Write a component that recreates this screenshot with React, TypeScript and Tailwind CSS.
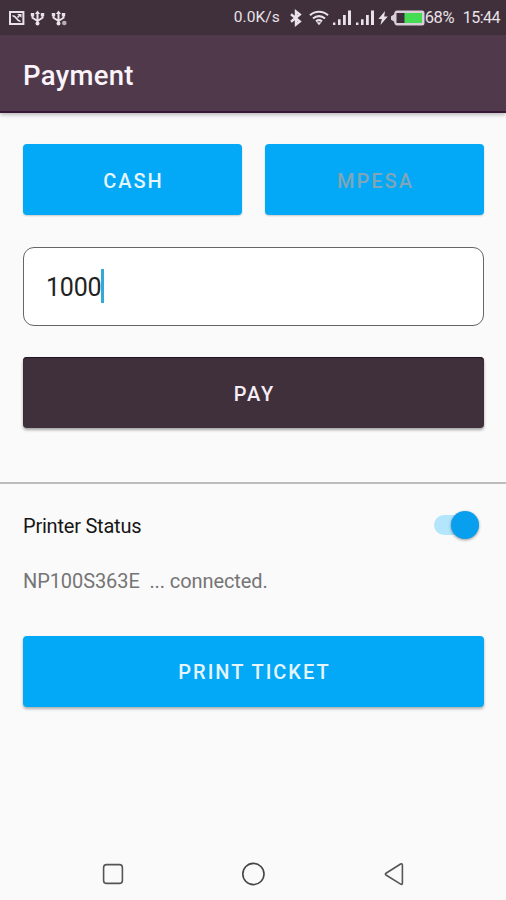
import React, { useState } from 'react';

type PaymentMethod = 'cash' | 'mpesa';

const UsbIcon: React.FC<{ badge?: boolean }> = ({ badge }) => (
  <svg width="16" height="16" viewBox="0 0 16 16" fill="none" stroke="#e9e2e8" strokeWidth="2">
    <path d="M7.5 2v12M2.5 5v2.8L7.5 11M12.5 5v2.8L7.5 11" />
    <path d="M4.9 4 7.5 .4 10.1 4ZM.8 3h3.4v3.2H.8ZM10.8 3h3.4v3.2h-3.4Z" fill="#e9e2e8" stroke="none" />
    <circle cx="7.5" cy="13.5" r="2" fill="#e9e2e8" stroke="none" />
    {badge && <circle cx="13.3" cy="13" r="2.3" fill="#b9adb7" stroke="none" />}
  </svg>
);

const SignalIcon = () => (
  <svg width="18" height="16" viewBox="0 0 18 16" fill="#e9e2e8">
    <path d="M0 12.5h2.4V15H0ZM5 9.3h2.6V15H5ZM10 5h2.8v10H10ZM15 .5h3V15h-3Z" />
  </svg>
);

const StatusBar = () => (
  <div className="flex h-[35px] items-center bg-[#40303c] pr-1.5 pl-2 text-[#e9e2e8]">
    <svg width="17" height="16" viewBox="0 0 17 16" fill="none" stroke="#e9e2e8" strokeWidth="2">
      <rect x="2" y="2" width="13.4" height="12" />
      <path d="M4.5 5.8c4-.5 3.5 5 8 5.7M9.5 7.5 12 5" strokeWidth="1.7" />
      <path d="M9 4h4.5v3.7Z" fill="#e9e2e8" stroke="none" />
    </svg>
    <div className="ml-[5px] flex gap-[5px]">
      <UsbIcon />
      <UsbIcon badge />
    </div>

    <span className="ml-auto w-[47px] pt-px text-[15.5px] leading-none tracking-[0.1px] whitespace-nowrap">0.0K/s</span>
    <svg className="ml-2" width="14" height="18" viewBox="0 0 14 18" fill="none" stroke="#e9e2e8" strokeWidth="2.4">
      <path d="m2 5.3 8.8 7.2L7 15.5v-13l3.8 3L2 12.7" />
    </svg>
    <svg className="ml-[6px]" width="20" height="16" viewBox="0 0 20 16" fill="none" stroke="#e9e2e8" strokeWidth="2.1">
      <path d="M1 5.3C6 .5 14 .5 19 5.3M4 8.5c3.5-3.2 8.5-3.2 12 0M7 11.4c2-1.6 4-1.6 6 0" />
      <path d="M7.5 12.3h5L10 15.2Z" fill="#e9e2e8" stroke="none" />
    </svg>
    <div className="ml-1 flex gap-[5px]">
      <SignalIcon />
      <SignalIcon />
    </div>
    <svg className="ml-1" width="10" height="16" viewBox="0 0 10 16" fill="#e9e2e8">
      <path d="M7 1 .4 9h3.5L2.4 15 9.8 6.6H6.2Z" />
    </svg>
    <svg className="ml-[2px]" width="35" height="16" viewBox="0 0 35 16">
      <path d="M7 .5h25a2.5 2.5 0 0 1 2.5 2.5v10a2.5 2.5 0 0 1-2.5 2.5H7Q4.500 15.500 4 11.500L1 9.800V6.200L4 4.500Q4.500.500 7 .500Z" fill="#d9cdd8" />
      <path d="M6.500 3h25.500v10H6.500Z" fill="#3e2d3a" />
      <path d="M14.500 3H32v10H14.500Z" fill="#43dc52" />
    </svg>
    <span className="w-[38px] pt-px text-[16.5px] leading-none tracking-[-0.4px]">68%</span>
    <span className="pt-px text-right text-[16px] leading-none tracking-[-0.5px]">15:44</span>
  </div>
);

interface ActionButtonProps {
  label: string;
  className: string;
  onClick?: () => void;
}

const ActionButton: React.FC<ActionButtonProps> = ({ label, className, onClick }) => (
  <button
    onClick={onClick}
    className={`h-[71px] w-full rounded-[4px] pl-[2px] text-[20px] font-medium tracking-[2px] ${className}`}
  >
    {label}
  </button>
);

const NavigationBar = () => (
  <div className="mt-auto flex h-[53px] items-center justify-between px-[101px]">
    <svg width="24" height="24" viewBox="0 0 24 24" fill="none" stroke="#555" strokeWidth="1.6">
      <rect x="2.6" y="2.6" width="18.8" height="18.8" rx="3" />
    </svg>
    <svg width="24" height="24" viewBox="0 0 24 24" fill="none" stroke="#444" strokeWidth="1.6">
      <circle cx="12.4" cy="12" r="10.600" />
    </svg>
    <svg width="24" height="24" viewBox="0 0 24 24" fill="none" stroke="#555" strokeWidth="1.6">
      <path d="M19.600 2 5 11.200q-1.300.9 0 1.800l14.600 9.100q1.800.8 1.800-1V3q0-1.800-1.800-1Z" />
    </svg>
  </div>
);

export default function App() {
  const [method, setMethod] = useState<PaymentMethod>('cash');
  const [amount] = useState('1000');
  const [printerOn, setPrinterOn] = useState(true);

  const methodColor = (value: PaymentMethod) => (method === value ? 'text-[#e6f5fd]' : 'text-[#7fa5b8]');

  return (
    <div className="flex h-screen w-full flex-col overflow-hidden bg-[#fafafa] font-['Roboto','Liberation_Sans',sans-serif]">
      <StatusBar />

      <header className="flex h-[78px] shrink-0 items-center border-b-2 border-[#381737] bg-[#50394b] px-[23px] pt-[6px] shadow-[0_2px_4px_rgba(0,0,0,0.25)]">
        <h1 className="text-[27.5px] font-medium tracking-[0.3px] text-[#fbf3fa]">Payment</h1>
      </header>

      {/* Payment form */}
      <section className="flex h-[371px] shrink-0 flex-col border-b-2 border-[#bdbdbd] pt-[31px] pr-[22px] pl-[23px]">
        <div className="grid grid-cols-2 gap-[23px]">
          <ActionButton
            label="CASH"
            onClick={() => setMethod('cash')}
            className={`bg-[#03a9f6] pt-[3px] shadow-[0_1px_2px_rgba(0,0,0,0.2)] ${methodColor('cash')}`}
          />
          <ActionButton
            label="MPESA"
            onClick={() => setMethod('mpesa')}
            className={`bg-[#03a9f6] pt-[3px] shadow-[0_1px_2px_rgba(0,0,0,0.2)] ${methodColor('mpesa')}`}
          />
        </div>

        <div className="mt-8 flex h-[79px] items-center rounded-[11px] border border-[#666] bg-white pl-[22px]">
          <span className="pt-[2px] text-[25px] tracking-[-0.2px] text-[#222]">{amount}</span>
          <span className="mb-px h-[34px] w-[3px] bg-[#34a9d8]" />
        </div>

        <div className="mt-[31px]">
          <ActionButton
            label="PAY"
            className="bg-[#40303c] pt-[3px] text-[#f6edf5] shadow-[0_2px_3px_rgba(0,0,0,0.35),inset_0_1px_1px_#1e1620]"
          />
        </div>
      </section>

      {/* Printer */}
      <section className="flex flex-col pr-[22px] pl-[23px]">
        <div className="mt-[21px] flex h-10 items-center justify-between">
          <span className="pt-[2px] text-[20px] tracking-[-0.22px] text-[#161616]">Printer Status</span>
          <button
            role="switch"
            aria-checked={printerOn}
            onClick={() => setPrinterOn(!printerOn)}
            className={`mr-[5px] flex h-5 w-[45px] items-center rounded-full bg-[#b3e5fb] ${printerOn ? 'justify-end' : 'justify-start'}`}
          >
            <span className="size-7 shrink-0 rounded-full bg-[#08a0ee] shadow-[0_1px_3px_rgba(0,0,0,0.4)]" />
          </button>
        </div>
        <p className="mt-[22px] text-[20px] leading-[28px] tracking-[-0.09px] whitespace-pre text-[#757575]">
          {'NP100S363E  ... connected.'}
        </p>
        <div className="mt-[41px]">
          <ActionButton
            label="PRINT TICKET"
            className="bg-[#03a9f6] pt-px text-[#e6f5fd] shadow-[0_2px_3px_rgba(0,0,0,0.3)]"
          />
        </div>
      </section>

      <NavigationBar />
    </div>
  );
}
